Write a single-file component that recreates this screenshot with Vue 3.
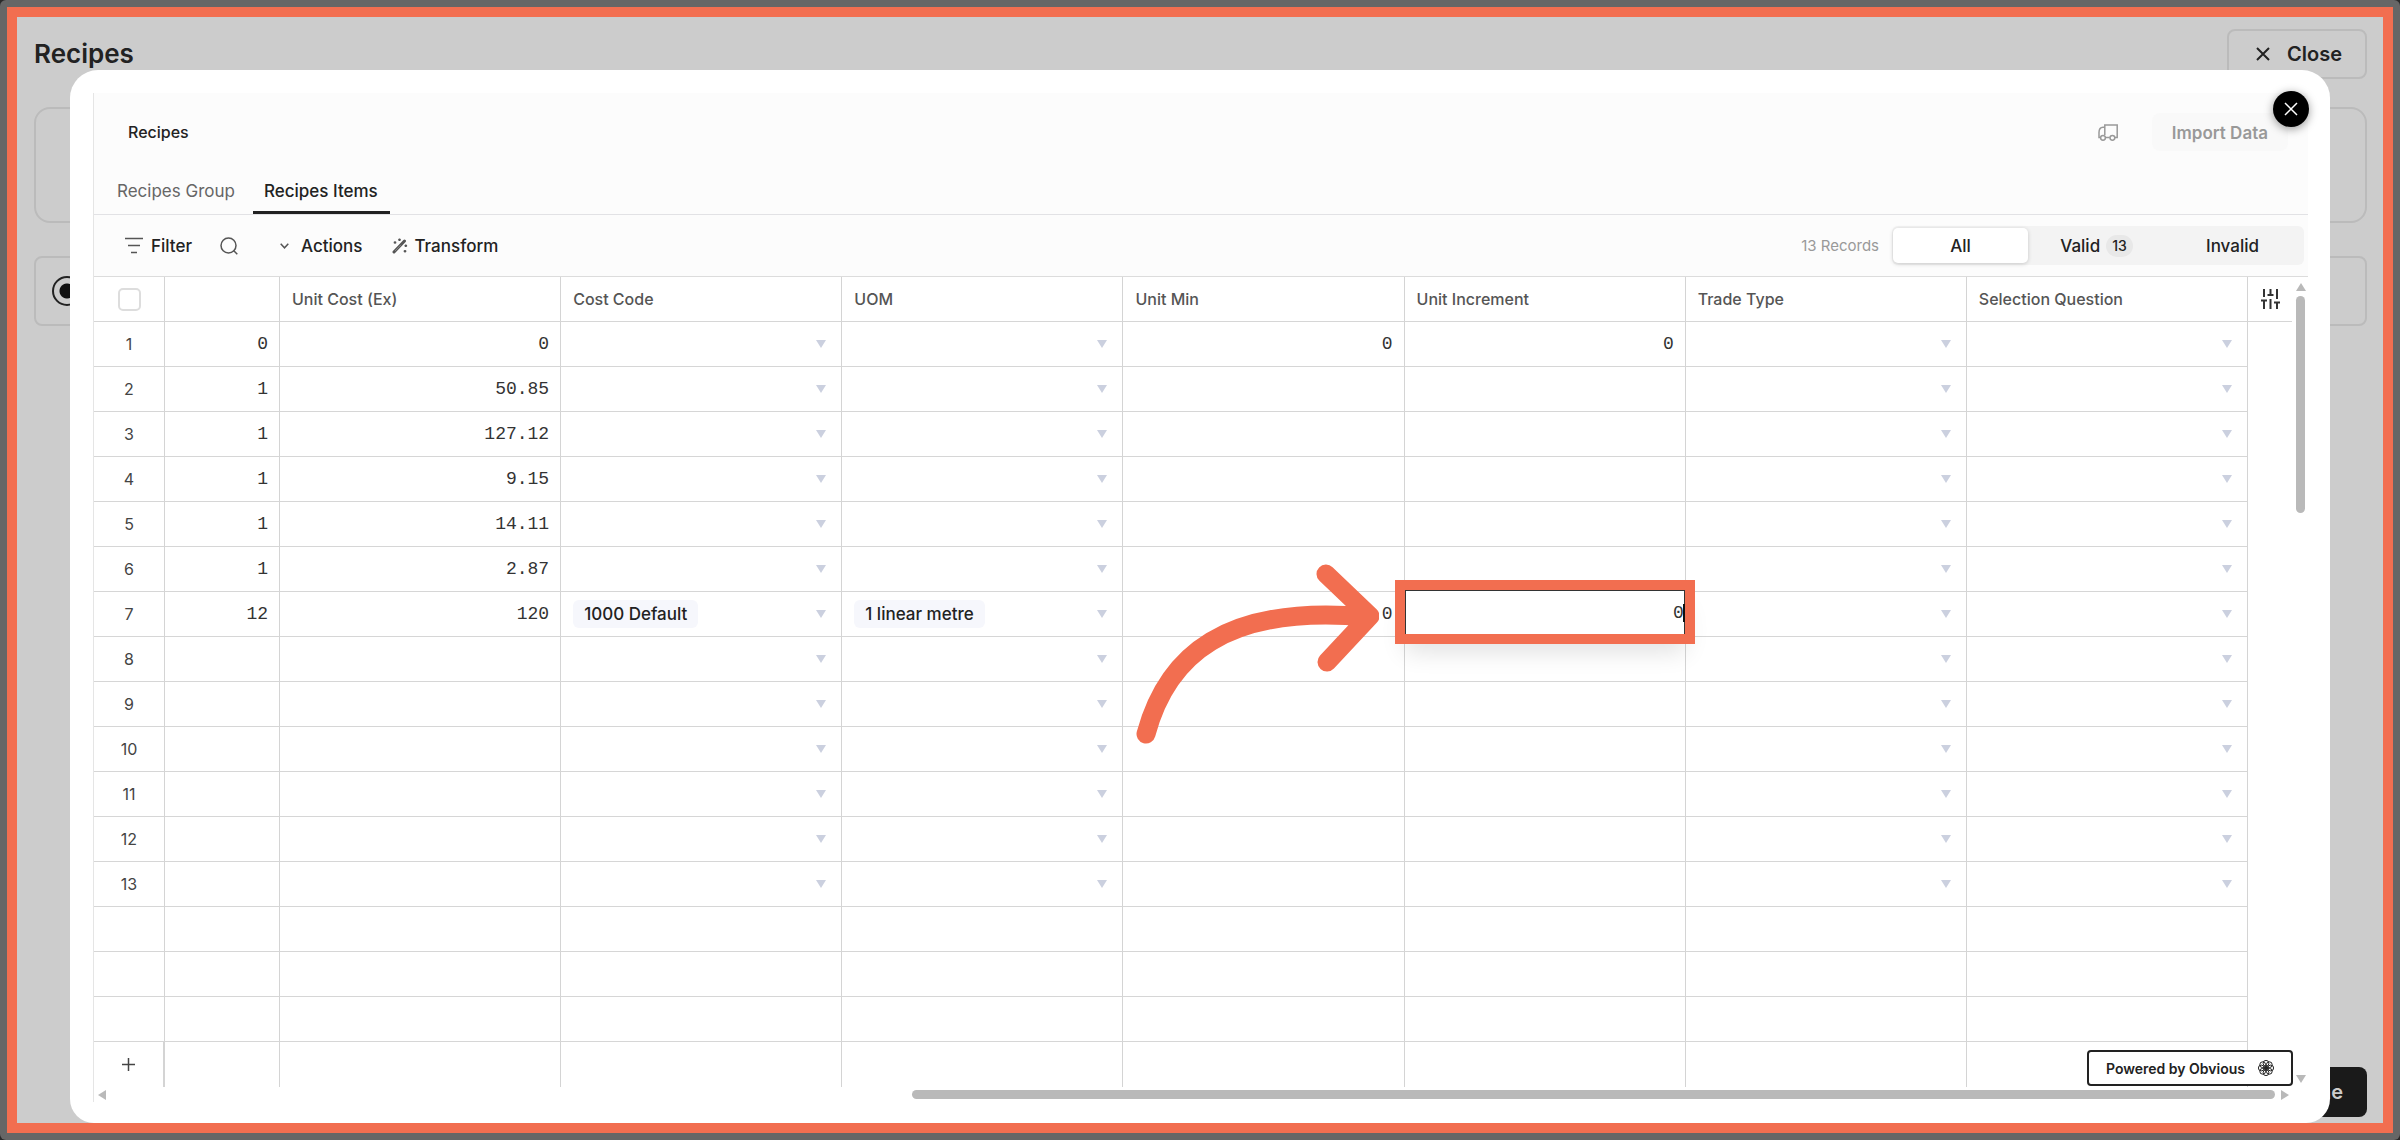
<template>
  <div class="screen">
    <div class="page">
      <header class="page-head">
        <h1>Recipes</h1>
        <button class="btn-close">
          <svg width="14" height="14" viewBox="0 0 14 14"><path d="M1 1l12 12M13 1L1 13" /></svg>
          Close
        </button>
      </header>
      <div class="card card-tall"></div>
      <label class="card card-option" aria-label="Recipes option">
        <input type="radio" checked />
      </label>
      <button class="btn-done">Done</button>
    </div>

    <div class="modal">
      <button class="modal-close" aria-label="Close dialog">
        <svg width="14" height="14" viewBox="0 0 14 14"><path d="M1 1l12 12M13 1L1 13" /></svg>
      </button>

      <div class="panel">
        <div class="panel-head">
          <h2>Recipes</h2>
          <div class="head-actions">
            <svg class="truck" width="20" height="17" viewBox="0 0 20 17">
              <path d="M6.8 11V1h12.4v12.4H17M11.8 13.4H7.6M6.8 3.2H5C2.5 3.2 1 5.5 1 8.5v4.9h1.4" />
              <circle cx="5" cy="13.8" r="2.4" />
              <circle cx="14.4" cy="13.8" r="2.4" />
            </svg>
            <button class="btn-import" disabled>Import Data</button>
          </div>
        </div>

        <nav class="tabs">
          <button
            v-for="tab in tabs"
            :key="tab"
            class="tab"
            :class="{ active: tab === activeTab }"
            @click="activeTab = tab"
          >{{ tab }}</button>
        </nav>

        <div class="toolbar">
          <button class="tool tool-filter">
            <svg width="18" height="17" viewBox="0 0 18 17"><path d="M0 1.5h18M3 8.5h12M6 15.5h6" /></svg>
            Filter
          </button>
          <button class="tool tool-search" aria-label="Search">
            <svg width="18" height="18" viewBox="0 0 18 18"><circle cx="8.5" cy="8.5" r="7.5" /><path d="M13.5 13.5l3.8 3.8" /></svg>
          </button>
          <button class="tool tool-actions">
            <svg width="9" height="6" viewBox="0 0 9 6"><path d="M.7.8l3.8 4L8.3.8" /></svg>
            Actions
          </button>
          <button class="tool tool-transform">
            <svg width="16" height="16" viewBox="0 0 16 16">
              <path class="wand" d="M2 14L12.5 3" />
              <path class="wand-gap" d="M3 13L9 6.8" />
              <path class="spark" d="M3 3.2v2.6M1.7 4.5h2.6M7.5.5v2.6M6.2 1.8h2.6M13.8 6.5v2.6M12.5 7.8h2.6M13 12v2.6M11.7 13.3h2.6" />
            </svg>
            Transform
          </button>

          <span class="records">13 Records</span>
          <div class="segments">
            <button class="segment selected">All</button>
            <button class="segment">Valid <span class="count">13</span></button>
            <button class="segment">Invalid</button>
          </div>
        </div>

        <div class="grid-area">
          <table class="sheet">
            <colgroup>
              <col class="col-index" />
              <col class="col-qty" />
              <col v-for="c in columns" :key="c.key" />
              <col class="col-settings" />
            </colgroup>
            <thead>
              <tr>
                <th><input type="checkbox" aria-label="Select all rows" /></th>
                <th></th>
                <th v-for="c in columns" :key="c.key">{{ c.label }}</th>
                <th class="settings">
                  <button aria-label="Column settings">
                    <svg width="19" height="20" viewBox="0 0 19 20">
                      <path d="M3 0v8M0 11.5h6M3 11.5V20M9.5 0v6M6.5 6h6M9.5 10v10M16 0v10M13 13.5h6M16 13.5V20" />
                    </svg>
                  </button>
                </th>
              </tr>
            </thead>
            <tbody>
              <tr v-for="row in rows" :key="row.id">
                <td class="index">
                  <template v-if="row.id <= 13">{{ row.id }}</template>
                  <button v-else-if="row.id === 17" class="add-row" aria-label="Add row">
                    <svg width="13" height="13" viewBox="0 0 13 13"><path d="M6.5 0v13M0 6.5h13" /></svg>
                  </button>
                </td>
                <td class="num">{{ row.qty }}</td>
                <td v-for="c in columns" :key="c.key" :class="{ num: !c.select }">
                  <div v-if="c.select" class="select-cell">
                    <span v-if="row[c.key]" class="chip">{{ row[c.key] }}</span>
                    <svg v-if="row.id <= 13" class="caret" width="10" height="8" viewBox="0 0 10 8"><path d="M0 0h10L5 8z" /></svg>
                  </div>
                  <div v-else-if="row.id === 7 && c.key === 'increment'" class="editor">
                    <input v-model="row.increment" aria-label="Unit Increment" />
                    <span class="text-caret"></span>
                    <svg class="pointer" width="246" height="190" viewBox="0 0 246 190">
                      <path d="M13 172C34 94 92 42 234 55M193 12L237 54L194 100" />
                    </svg>
                  </div>
                  <template v-else>{{ row[c.key] }}</template>
                </td>
                <td class="settings"></td>
              </tr>
            </tbody>
          </table>

          <div class="scroll-y">
            <svg width="10" height="8" viewBox="0 0 10 8"><path d="M5 0l5 8H0z" /></svg>
            <div class="track"><div class="thumb"></div></div>
            <svg width="10" height="8" viewBox="0 0 10 8"><path d="M0 0h10L5 8z" /></svg>
          </div>

          <a class="powered" href="#">
            Powered by Obvious
            <svg width="16" height="16" viewBox="0 0 16 16">
              <circle
                v-for="p in petals"
                :key="p.x + '-' + p.y"
                :cx="p.x"
                :cy="p.y"
                r="2.9"
              />
              <circle class="core" cx="8" cy="8" r="1.5" />
            </svg>
          </a>
        </div>

        <div class="scroll-x">
          <svg width="8" height="10" viewBox="0 0 8 10"><path d="M8 0v10L0 5z" /></svg>
          <div class="track"><div class="thumb"></div></div>
          <svg width="8" height="10" viewBox="0 0 8 10"><path d="M0 0l8 5-8 5z" /></svg>
        </div>
      </div>
    </div>
  </div>
</template>

<script setup>
import { ref } from 'vue'

const tabs = ['Recipes Group', 'Recipes Items']
const activeTab = ref('Recipes Items')

const columns = [
  { key: 'cost', label: 'Unit Cost (Ex)' },
  { key: 'code', label: 'Cost Code', select: true },
  { key: 'uom', label: 'UOM', select: true },
  { key: 'min', label: 'Unit Min' },
  { key: 'increment', label: 'Unit Increment' },
  { key: 'trade', label: 'Trade Type', select: true },
  { key: 'question', label: 'Selection Question', select: true }
]

const data = [
  { qty: '0', cost: '0', min: '0', increment: '0' },
  { qty: '1', cost: '50.85' },
  { qty: '1', cost: '127.12' },
  { qty: '1', cost: '9.15' },
  { qty: '1', cost: '14.11' },
  { qty: '1', cost: '2.87' },
  { qty: '12', cost: '120', code: '1000 Default', uom: '1 linear metre', min: '0', increment: '0' }
]

// 13 records, then blank filler rows; the last one holds the add button
const rows = ref(Array.from({ length: 17 }, (_, i) => ({ id: i + 1, ...data[i] })))

// ring of circles for the Obvious mark
const petals = Array.from({ length: 8 }, (_, i) => ({
  x: Math.round((8 + 4.7 * Math.cos((i * Math.PI) / 4)) * 10) / 10,
  y: Math.round((8 + 4.7 * Math.sin((i * Math.PI) / 4)) * 10) / 10
}))
</script>

<style>
body {
  margin: 0;
  background: #2a2a2a;
}
</style>

<style scoped>
* {
  box-sizing: border-box;
}

.screen {
  position: relative;
  min-height: 100vh;
  padding: 7px;
  display: grid;
  border-radius: 6px;
  background: #666;
  font-family: Inter, "Liberation Sans", sans-serif;
  color: #222;
}

button {
  font: inherit;
  color: inherit;
  border: none;
  background: none;
  padding: 0;
  cursor: pointer;
}

svg {
  display: block;
  flex-shrink: 0;
  fill: none;
  stroke: currentColor;
}

/* page behind the dialog */
.page {
  display: flex;
  flex-direction: column;
  border: 10px solid #f26e50;
  background: #ccc;
  padding: 12px 16px 6px 17px;
}

.page-head {
  display: flex;
  justify-content: space-between;
  align-items: flex-start;
}

h1 {
  margin: 0;
  padding-top: 9px;
  font-size: 26px;
  line-height: 32px;
  font-weight: 600;
}

.btn-close {
  display: flex;
  align-items: center;
  gap: 17px;
  height: 50px;
  padding: 0 23px 0 27px;
  border: 2px solid #bbb;
  border-radius: 8px;
  font-size: 20px;
  font-weight: 600;
}

.btn-close svg {
  stroke-width: 2;
}

.card {
  border: 2px solid #bbb;
}

.card-tall {
  height: 116px;
  margin-top: 28px;
  border-radius: 16px;
}

.card-option {
  display: flex;
  align-items: center;
  height: 70px;
  margin-top: 33px;
  padding-left: 16px;
  border-radius: 8px;
}

.card-option input {
  appearance: none;
  width: 30px;
  height: 30px;
  margin: 0;
  border: 2px solid #222;
  border-radius: 50%;
  background: radial-gradient(circle, #111 7px, transparent 8px);
}

.btn-done {
  align-self: flex-end;
  height: 50px;
  margin-top: auto;
  padding: 0 24px;
  border-radius: 8px;
  background: #1a1a1a;
  color: #ccc;
  font-size: 20px;
  font-weight: 600;
}

/* dialog */
.modal {
  position: absolute;
  inset: 70px 70px 17px;
  padding: 23px 22px 23px 23px;
  border-radius: 28px 28px 24px 24px;
  background: #fff;
}

.modal-close {
  position: absolute;
  top: 21px;
  right: 21px;
  z-index: 2;
  display: flex;
  align-items: center;
  justify-content: center;
  width: 36px;
  height: 36px;
  border-radius: 50%;
  background: #000;
  color: #fff;
  box-shadow: 0 2px 10px rgba(0, 0, 0, 0.4);
}

.modal-close svg {
  stroke-width: 1.5;
}

.panel {
  border-left: 1px solid #e5e5e5;
  background: #fcfcfc;
}

.panel-head {
  display: flex;
  justify-content: space-between;
  align-items: flex-start;
  height: 74px;
  padding: 20px 20px 0 34px;
}

h2 {
  margin: 0;
  font-size: 16px;
  line-height: 38px;
  font-weight: 500;
}

.head-actions {
  display: flex;
  align-items: center;
  gap: 34px;
  color: #999;
}

.truck {
  stroke-width: 1.5;
}

.btn-import {
  height: 38px;
  padding: 2px 20px 0;
  border-radius: 8px;
  background: #f9f9f9;
  color: #999;
  font-size: 17px;
  font-weight: 600;
}

.tabs {
  display: flex;
  gap: 6px;
  height: 48px;
  padding-left: 12px;
  border-bottom: 1px solid #e2e2e5;
}

.tab {
  padding: 3px 12px 0 11px;
  border-bottom: 3px solid transparent;
  color: #666;
  font-size: 17px;
}

.tab.active {
  border-color: #222;
  color: #222;
  font-weight: 500;
}

.toolbar {
  display: flex;
  align-items: center;
  height: 62px;
  padding: 0 4px 0 31px;
  border-bottom: 1px solid #dcdcdc;
  font-size: 17px;
  font-weight: 500;
}

.tool {
  display: flex;
  align-items: center;
}

.tool svg {
  color: #555;
  stroke-width: 1.5;
}

.tool-filter {
  gap: 8px;
}

.tool-search {
  margin-left: 28px;
}

.tool-actions {
  gap: 12px;
  margin-left: 42px;
}

.tool-transform {
  gap: 6px;
  margin-left: 30px;
}

.tool .wand {
  stroke-width: 3;
  stroke-linecap: round;
}

.tool .wand-gap {
  stroke: #888;
  stroke-width: 1;
}

.records {
  margin-left: auto;
  margin-right: 13px;
  color: #999;
  font-size: 15px;
  font-weight: 400;
}

.segments {
  display: grid;
  grid-template-columns: repeat(3, 135px);
  gap: 1px;
  height: 39px;
  padding: 2px 4px 2px 1px;
  border-radius: 6px;
  background: #f3f3f3;
}

.segment {
  display: flex;
  align-items: center;
  justify-content: center;
  gap: 6px;
  border-radius: 5px;
}

.segment.selected {
  background: #fff;
  box-shadow: 0 1px 4px rgba(0, 0, 0, 0.18);
}

.count {
  padding: 0 6px;
  border-radius: 11px;
  background: #e8e8e8;
  font-size: 14px;
  line-height: 22px;
}

/* spreadsheet */
.grid-area {
  position: relative;
  display: flex;
  background: #fff;
}

.sheet {
  flex: 1;
  width: 100%;
  table-layout: fixed;
  border-collapse: separate;
  border-spacing: 0;
}

.col-index {
  width: 71px;
}

.col-qty {
  width: 115px;
}

.col-settings {
  width: 44px;
}

th,
td {
  height: 45px;
  padding: 0 12px;
  border-right: 1px solid #d4d4d4;
  border-bottom: 1px solid #d6d6d6;
  text-align: left;
  white-space: nowrap;
}

th {
  color: #555;
  font-size: 16px;
  font-weight: 500;
}

th:first-child,
.index {
  text-align: center;
}

th input {
  appearance: none;
  display: block;
  width: 23px;
  height: 23px;
  margin: 0 auto;
  border: 2px solid #ddd;
  border-radius: 5px;
  background: #fff;
}

.index {
  color: #444;
  font-size: 16px;
}

tbody tr:last-child td {
  border-bottom: none;
}

tbody tr:last-child .index {
  border-right-width: 2px;
}

.add-row {
  display: block;
  margin: 0 auto;
}

.add-row svg {
  stroke-width: 1.5;
}

th.settings,
td.settings {
  padding: 0;
  border-right: none;
}

td.settings {
  border-bottom: none;
}

.settings button {
  display: block;
  margin: 0 auto;
  color: #333;
}

.settings svg {
  stroke-width: 2;
}

td.num {
  padding-right: 11px;
  font-family: "Liberation Mono", "DejaVu Sans Mono", monospace;
  font-size: 18px;
  text-align: right;
  color: #333;
}

.select-cell {
  display: flex;
  align-items: center;
  height: 44px;
  padding-right: 3px;
}

.chip {
  padding: 0 11px;
  border-radius: 6px;
  background: #f6f7fc;
  font-size: 17px;
  font-weight: 500;
  line-height: 28px;
}

.caret {
  margin-left: auto;
  fill: #cbd0df;
  stroke: none;
}

/* highlighted cell editor */
.editor {
  position: relative;
  height: 44px;
  margin: -2px -11px 2px -12px;
  background: #fff;
  outline: 10px solid #f26e50;
  box-shadow: 0 18px 24px rgba(0, 0, 0, 0.12);
}

.editor input {
  width: 100%;
  height: 100%;
  padding: 0;
  border: 1px solid #333;
  border-bottom: none;
  outline: none;
  background: #fff;
  color: #333;
  font: inherit;
  text-align: right;
}

.text-caret {
  position: absolute;
  top: 14px;
  right: 0;
  width: 2px;
  height: 18px;
  background: #111;
}

.pointer {
  position: absolute;
  top: -28px;
  right: calc(100% + 26px);
  stroke: #f26e50;
  stroke-width: 19;
  stroke-linecap: round;
  stroke-linejoin: round;
}

/* scrollbars */
.scroll-y {
  display: flex;
  flex-direction: column;
  align-items: center;
  width: 16px;
  padding: 6px 2px 4px 3px;
}

.scroll-y svg,
.scroll-x svg {
  fill: #b9b9b9;
  stroke: none;
}

.scroll-y .track {
  flex: 1;
  width: 9px;
  padding: 5px 0;
}

.scroll-y .thumb {
  height: 28%;
  border-radius: 5px;
  background: #b9b9b9;
}

.scroll-x {
  display: flex;
  align-items: center;
  gap: 6px;
  height: 15px;
  padding: 0 19px 0 4px;
  background: #fff;
}

.scroll-x .track {
  flex: 1;
}

.scroll-x .thumb {
  width: 63%;
  height: 9px;
  margin-left: auto;
  border-radius: 5px;
  background: #b9b9b9;
}

.powered {
  position: absolute;
  right: 15px;
  bottom: 1px;
  display: flex;
  align-items: center;
  gap: 13px;
  height: 36px;
  padding: 0 17px;
  border: 2px solid #222;
  border-radius: 4px;
  background: #fff;
  color: #222;
  font-size: 14px;
  font-weight: 600;
  text-decoration: none;
}

.powered svg {
  stroke-width: 1;
}

.core {
  fill: #222;
}
</style>
